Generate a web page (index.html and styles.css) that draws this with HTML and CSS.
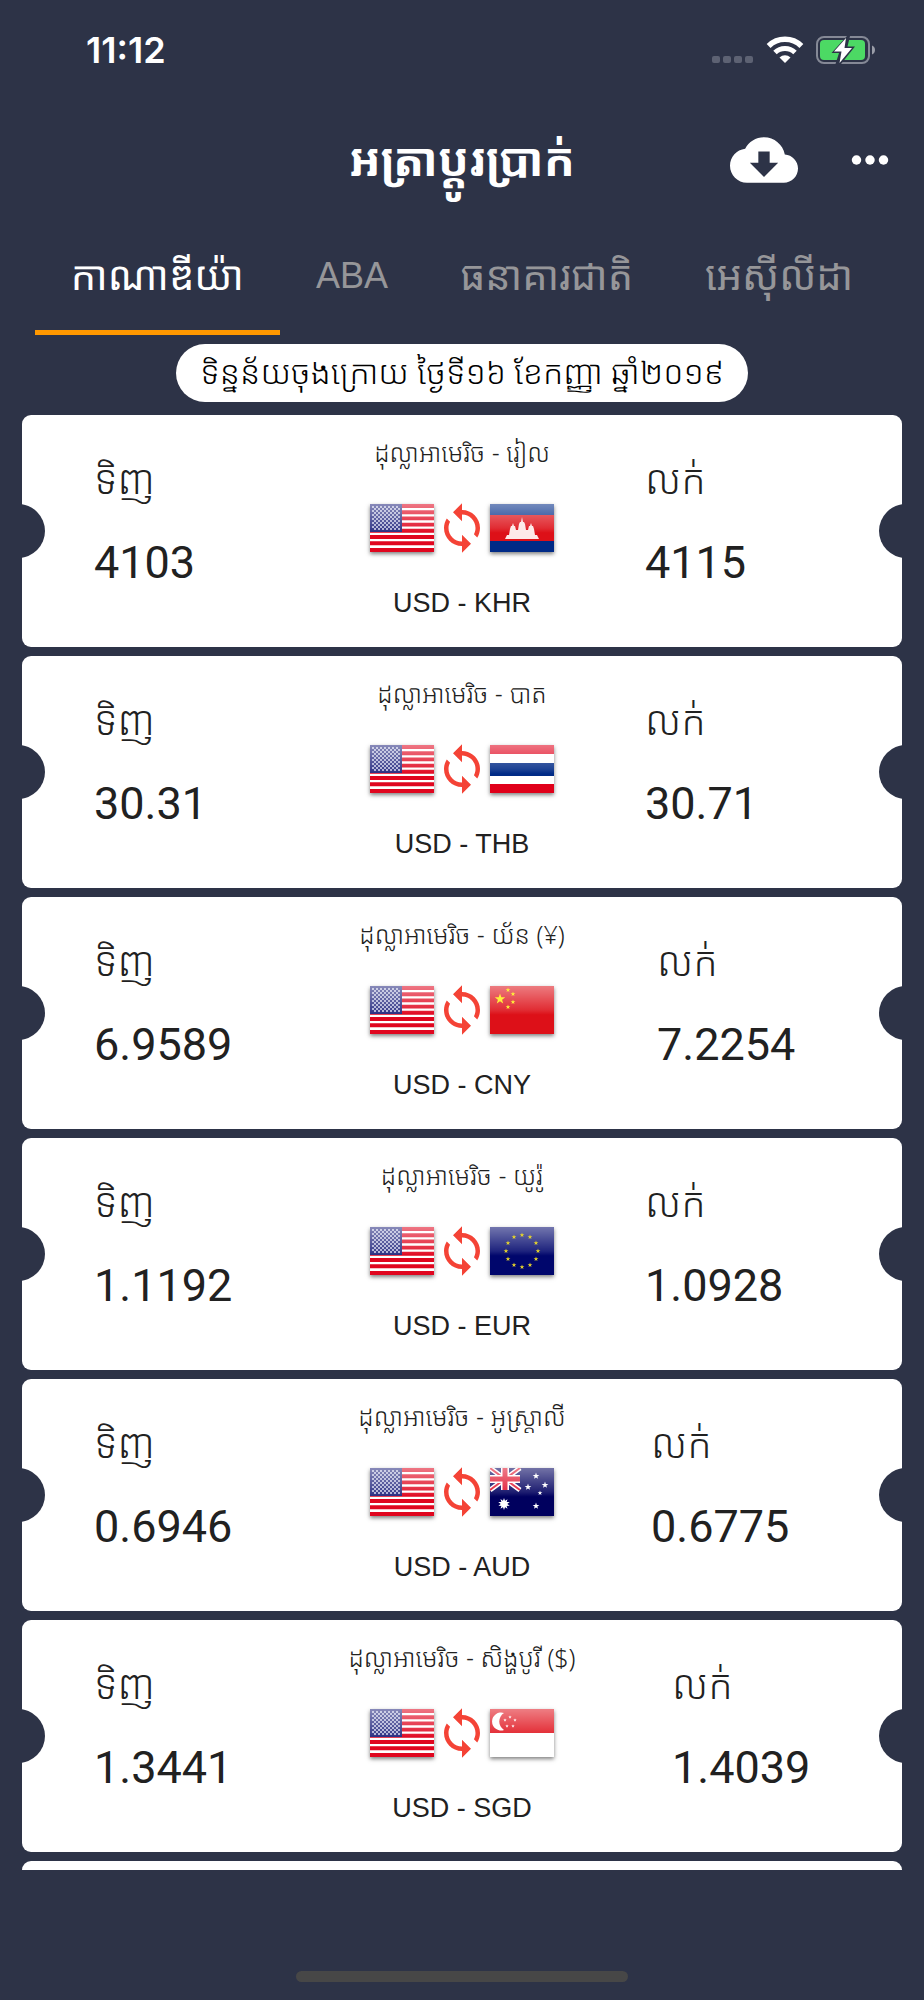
FILE: index.html
```html
<!DOCTYPE html>
<html lang="km">
<head>
    <meta charset="UTF-8">
    <meta name="viewport" content="width=device-width, initial-scale=1.0">
    <title>អត្រាប្ដូរប្រាក់</title>
    <link rel="stylesheet" href="styles.css">
</head>
<body>
    <!-- shared drawings -->
    <svg class="sprite" aria-hidden="true">
        <defs>
            <linearGradient id="shine" x1="0" y1="0" x2="0" y2="1">
                <stop offset="0" stop-color="#fff" stop-opacity=".45"/>
                <stop offset=".5" stop-color="#fff" stop-opacity=".12"/>
                <stop offset=".6" stop-color="#fff" stop-opacity="0"/>
            </linearGradient>
            <pattern id="stars" width="4" height="4" patternUnits="userSpaceOnUse">
                <rect width="4" height="4" fill="#262a80"/>
                <circle cx="1" cy="1" r="1" fill="#d8daf0"/>
                <circle cx="3" cy="3" r="1" fill="#d8daf0"/>
            </pattern>
            <polygon id="star" points="0,-5 1.2,-1.6 4.8,-1.6 1.9,.6 2.9,4 0,2 -2.9,4 -1.9,.6 -4.8,-1.6 -1.2,-1.6"/>
        </defs>
        <symbol id="us" viewBox="0 0 64 48">
            <rect width="64" height="48" fill="#fff"/>
            <path d="M0 2h64M0 8.2h64M0 14.4h64M0 20.6h64M0 26.8h64M0 33h64M0 39.2h64M0 46h64" stroke="#e0061f" stroke-width="3.9"/>
            <rect width="32" height="28" fill="#262a80"/>
            <rect x="2" y="2" width="28" height="24" fill="url(#stars)"/>
            <rect width="64" height="48" fill="url(#shine)"/>
        </symbol>
        <symbol id="kh" viewBox="0 0 64 48">
            <rect width="64" height="48" fill="#002a86"/>
            <rect y="11" width="64" height="26" fill="#dd1018"/>
            <path d="M15 35l2-4h2l1-6 1-3h1l1-3 1 3h1l1 4h2l1-6 1-2h1l1-5 1 5h1l1 2 1 6h2l1-4h1l1-3 1 3h1l1 3 1 6h2l2 4z" fill="#fde8e8"/>
            <rect width="64" height="48" fill="url(#shine)"/>
        </symbol>
        <symbol id="th" viewBox="0 0 64 48">
            <rect width="64" height="48" fill="#e0001a"/>
            <rect y="9" width="64" height="30" fill="#fff"/>
            <rect y="18" width="64" height="13" fill="#002a86"/>
            <rect width="64" height="48" fill="url(#shine)"/>
        </symbol>
        <symbol id="cn" viewBox="0 0 64 48">
            <rect width="64" height="48" fill="#dd1018"/>
            <rect width="64" height="48" fill="url(#shine)"/>
            <g fill="#ffef3a">
                <use href="#star" transform="translate(10 13) scale(1.1)"/>
                <use href="#star" transform="translate(18 4) scale(.5)"/>
                <use href="#star" transform="translate(23 8) scale(.5)"/>
                <use href="#star" transform="translate(23 16) scale(.5)"/>
                <use href="#star" transform="translate(18 21) scale(.5)"/>
            </g>
        </symbol>
        <symbol id="eu" viewBox="0 0 64 48">
            <rect width="64" height="48" fill="#00066c"/>
            <rect width="64" height="48" fill="url(#shine)"/>
            <g fill="#e5d32c">
                <use href="#star" transform="translate(32 8) scale(.5)"/>
                <use href="#star" transform="translate(40 10) scale(.5)"/>
                <use href="#star" transform="translate(46 16) scale(.5)"/>
                <use href="#star" transform="translate(48 24) scale(.5)"/>
                <use href="#star" transform="translate(46 32) scale(.5)"/>
                <use href="#star" transform="translate(40 38) scale(.5)"/>
                <use href="#star" transform="translate(32 40) scale(.5)"/>
                <use href="#star" transform="translate(24 38) scale(.5)"/>
                <use href="#star" transform="translate(18 32) scale(.5)"/>
                <use href="#star" transform="translate(16 24) scale(.5)"/>
                <use href="#star" transform="translate(18 16) scale(.5)"/>
                <use href="#star" transform="translate(24 10) scale(.5)"/>
            </g>
        </symbol>
        <symbol id="au" viewBox="0 0 64 48">
            <rect width="64" height="48" fill="#00005e"/>
            <path d="M0 0l30 22M30 0L0 22" stroke="#fff" stroke-width="5"/>
            <path d="M0 0l30 22M30 0L0 22" stroke="#e0102a" stroke-width="2"/>
            <path d="M15 0v22M0 11h30" stroke="#fff" stroke-width="8"/>
            <path d="M15 0v22M0 11h30" stroke="#e0102a" stroke-width="5"/>
            <rect width="64" height="48" fill="url(#shine)"/>
            <g fill="#fff">
                <use href="#star" transform="translate(14 36) scale(1.2)"/>
                <use href="#star" transform="translate(14 36) rotate(36) scale(1.2)"/>
                <use href="#star" transform="translate(46 8) scale(.7)"/>
                <use href="#star" transform="translate(38 19) scale(.7)"/>
                <use href="#star" transform="translate(55 17) scale(.7)"/>
                <use href="#star" transform="translate(50 25) scale(.5)"/>
                <use href="#star" transform="translate(46 38) scale(.7)"/>
            </g>
        </symbol>
        <symbol id="sg" viewBox="0 0 64 48">
            <rect width="64" height="48" fill="#fff"/>
            <rect width="64" height="24" fill="#e0141e"/>
            <rect width="64" height="48" fill="url(#shine)"/>
            <path d="M14 4a9 9 0 1 0 0 17a10 10 0 0 1 0-17z" fill="#fff"/>
            <g fill="#fff">
                <use href="#star" transform="translate(20 8) scale(.35)"/>
                <use href="#star" transform="translate(15 11) scale(.35)"/>
                <use href="#star" transform="translate(25 11) scale(.35)"/>
                <use href="#star" transform="translate(17 17) scale(.35)"/>
                <use href="#star" transform="translate(23 17) scale(.35)"/>
            </g>
        </symbol>
        <symbol id="sync" viewBox="0 0 24 24">
            <path d="M12 4V1L8 5l4 4V6c3.31 0 6 2.69 6 6 0 1.01-.25 1.97-.7 2.8l1.46 1.46C19.54 15.03 20 13.57 20 12c0-4.42-3.58-8-8-8zm0 14c-3.31 0-6-2.69-6-6 0-1.01.25-1.97.7-2.8L5.24 7.74C4.46 8.97 4 10.43 4 12c0 4.42 3.58 8 8 8v3l4-4-4-4v3z" fill="#f44336"/>
        </symbol>
    </svg>

    <div class="statusbar">
        <span class="time">11:12</span>
        <div class="status-icons">
            <svg width="42" height="28" viewBox="0 0 42 28" fill="#5d6273">
                <rect x="0" y="20" width="8" height="7" rx="2"/>
                <rect x="11" y="20" width="8" height="7" rx="2"/>
                <rect x="22" y="20" width="8" height="7" rx="2"/>
                <rect x="33" y="20" width="8" height="7" rx="2"/>
            </svg>
            <svg width="38" height="28" viewBox="0 0 38 28" fill="none" stroke="#fff">
                <path d="M2.600 10a23.500 23.500 0 0 1 32.800 0" stroke-width="5.500"/>
                <path d="M9 16.500a14.500 14.500 0 0 1 20 0" stroke-width="5"/>
                <path d="M19 27l-5.500-5.500a8 8 0 0 1 11 0z" fill="#fff" stroke="none"/>
            </svg>
            <svg width="60" height="28" viewBox="0 0 60 28">
                <rect x="1" y="1" width="52" height="26" rx="7" fill="none" stroke="#858996" stroke-width="2"/>
                <rect x="4" y="4" width="45" height="20" rx="4" fill="#4cd964"/>
                <path d="M56 9.500c4 1.500 4 7.500 0 9z" fill="#9a9da8"/>
                <path d="M31 0L15.500 17H23l-3.500 11H25L39 10.500h-7.500L34 0z" fill="#2d3347"/>
                <path d="M30 2L18 15.500h7.500L23.500 27 36 12h-7.500z" fill="#fff"/>
            </svg>
        </div>
    </div>

    <header class="appbar">
        <h1>អត្រាប្ដូរប្រាក់</h1>
        <div class="actions">
            <button type="button" aria-label="Download">
                <svg width="68" height="68" viewBox="0 0 24 24" fill="#fff"><path d="M19.35 10.04C18.67 6.59 15.64 4 12 4 9.11 4 6.6 5.64 5.35 8.04 2.34 8.36 0 10.91 0 14c0 3.31 2.69 6 6 6h13c2.76 0 5-2.24 5-5 0-2.64-2.05-4.78-4.65-4.96zM17 13l-5 5-5-5h3V9h4v4h3z"/></svg>
            </button>
            <button type="button" aria-label="More">
                <svg width="54" height="54" viewBox="0 0 24 24" fill="#fff"><circle cx="6" cy="12" r="2.100"/><circle cx="12" cy="12" r="2.100"/><circle cx="18" cy="12" r="2.100"/></svg>
            </button>
        </div>
    </header>

    <nav class="tabs">
        <button type="button" class="tab active">កាណាឌីយ៉ា</button>
        <button type="button" class="tab latin">ABA</button>
        <button type="button" class="tab">ធនាគារជាតិ</button>
        <button type="button" class="tab">អេស៊ីលីដា</button>
    </nav>

    <p class="updated">ទិន្នន័យចុងក្រោយ ថ្ងៃទី១៦ ខែកញ្ញា ឆ្នាំ២០១៩</p>

    <main class="list" id="rateList"></main>

    <div class="home"><span></span></div>

    <script>
        let rates = [
            { name: "រៀល", code: "KHR", flag: "kh", buy: "4103", sell: "4115", size: "" },
            { name: "បាត", code: "THB", flag: "th", buy: "30.31", sell: "30.71", size: "" },
            { name: "យ័ន (¥)", code: "CNY", flag: "cn", buy: "6.9589", sell: "7.2254", size: "wide" },
            { name: "យូរ៉ូ", code: "EUR", flag: "eu", buy: "1.1192", sell: "1.0928", size: "" },
            { name: "អូស្ត្រាលី", code: "AUD", flag: "au", buy: "0.6946", sell: "0.6775", size: "medium" },
            { name: "សិង្ហបូរី ($)", code: "SGD", flag: "sg", buy: "1.3441", sell: "1.4039", size: "widest" }
        ];

        let list = document.getElementById("rateList");

        rates.forEach((rate) => {
            let card = document.createElement("section");
            card.className = "card " + rate.size;
            card.innerHTML = `
                <div class="side">
                    <span class="label">ទិញ</span>
                    <span class="value">${rate.buy}</span>
                </div>
                <div class="pair">
                    <span class="name">ដុល្លាអាមេរិច - ${rate.name}</span>
                    <div class="flags">
                        <svg class="flag"><use href="#us"/></svg>
                        <svg class="sync"><use href="#sync"/></svg>
                        <svg class="flag"><use href="#${rate.flag}"/></svg>
                    </div>
                    <span class="code">USD - ${rate.code}</span>
                </div>
                <div class="side">
                    <span class="label">លក់</span>
                    <span class="value">${rate.sell}</span>
                </div>
            `;
            list.appendChild(card);
        });

        // next card peeks in at the end of the list
        let next = document.createElement("section");
        next.className = "card";
        list.appendChild(next);
    </script>
</body>
</html>
```
FILE: styles.css
```css
* {
    box-sizing: border-box;
}
body {
    font-family: Roboto, "Noto Sans Khmer", "Noto Sans", sans-serif;
    background: #2d3347;
    color: #212121;
    margin: 0;
    height: 100vh;
    display: flex;
    flex-direction: column;
    overflow: hidden;
}
button {
    background: none;
    border: none;
    padding: 0;
    font-family: inherit;
    color: inherit;
    cursor: pointer;
}
svg {
    display: block;
}
.sprite {
    position: absolute;
    width: 0;
    height: 0;
}
.statusbar {
    height: 100px;
    flex-shrink: 0;
    padding: 0 48px 0 86px;
    display: flex;
    justify-content: space-between;
    align-items: center;
    color: white;
}
.time {
    font-family: Inter, sans-serif;
    font-size: 36px;
    font-weight: 600;
}
.status-icons {
    display: flex;
    gap: 12px;
}
.appbar {
    height: 120px;
    flex-shrink: 0;
    padding: 0 27px;
    display: grid;
    grid-template-columns: 1fr auto 1fr;
    align-items: center;
    color: white;
}
h1 {
    grid-column: 2;
    margin: 0;
    font-size: 46px;
    line-height: 80px;
    font-weight: 700;
}
.actions {
    display: flex;
    justify-content: flex-end;
    align-items: center;
    gap: 45px;
}
.tabs {
    flex-shrink: 0;
    height: 115px;
    display: flex;
    justify-content: center;
}
.tab {
    padding: 2px 36px 0;
    font-family: "Liberation Sans", "Noto Sans Khmer", sans-serif;
    font-size: 40px;
    font-weight: 400;
    line-height: 60px;
    color: #969699;
    border-bottom: 5px solid transparent;
}
.tab.latin {
    font-size: 36px;
}
.tab.active {
    color: white;
    border-bottom-color: #ff9800;
}
.updated {
    flex-shrink: 0;
    align-self: center;
    margin: 9px 0 13px;
    padding: 0 24px;
    background: white;
    border-radius: 29px;
    color: black;
    font-size: 33px;
    font-weight: 300;
    line-height: 58px;
}
.list {
    flex: 1;
    min-height: 0;
    overflow: hidden;
    padding: 0 22px;
}
.card {
    --pair: 184px;
    position: relative;
    height: 232px;
    margin-bottom: 9px;
    background: white;
    border-radius: 9px;
    display: grid;
    grid-template-columns: 1fr var(--pair) 1fr;
    overflow: hidden;
}
.card.medium {
    --pair: 196px;
}
.card.wide {
    --pair: 208px;
}
.card.widest {
    --pair: 238px;
}
.card::before, .card::after {
    content: "";
    position: absolute;
    top: 89px;
    width: 54px;
    height: 54px;
    border-radius: 50%;
    background: #2d3347;
}
.card::before {
    left: -31px;
}
.card::after {
    right: -31px;
}
.side {
    display: flex;
    flex-direction: column;
    padding: 36px 0 0 72px;
}
.side:last-child {
    padding-left: 91px;
}
.label {
    font-size: 40px;
    font-weight: 300;
    line-height: 60px;
}
.value {
    font-size: 45px;
    line-height: 60px;
    margin-top: 22px;
}
.pair {
    display: flex;
    flex-direction: column;
    align-items: center;
    padding-top: 17px;
    white-space: nowrap;
}
.name {
    font-family: "Noto Sans Khmer", "Liberation Sans", sans-serif;
    font-size: 25px;
    font-weight: 300;
    line-height: 40px;
}
.flags {
    display: flex;
    align-items: center;
    gap: 1px;
    margin: 29px 0 28px;
}
.flag {
    width: 64px;
    height: 48px;
    box-shadow: 0 2px 4px rgba(0, 0, 0, 0.5);
}
.sync {
    width: 54px;
    height: 54px;
}
.code {
    font-family: "Liberation Sans", sans-serif;
    font-size: 27px;
    line-height: 40px;
}
.home {
    height: 130px;
    flex-shrink: 0;
    display: flex;
    justify-content: center;
    align-items: flex-end;
    padding-bottom: 18px;
}
.home span {
    width: 36%;
    height: 11px;
    border-radius: 6px;
    background: #474747;
}
```
